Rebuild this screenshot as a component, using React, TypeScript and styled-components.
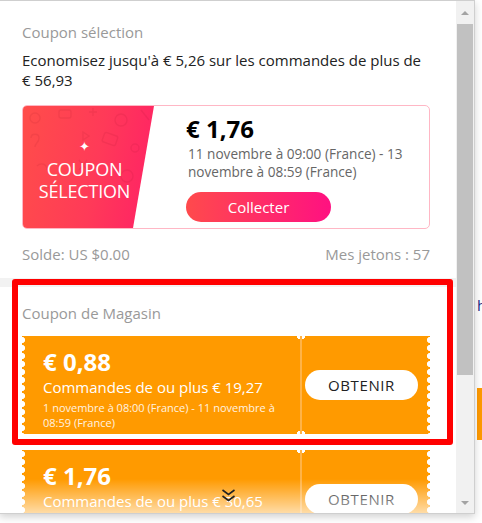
import React from 'react'
import styled, { createGlobalStyle } from 'styled-components'

const GlobalStyle = createGlobalStyle`
  html, body {
    margin: 0;
    padding: 0;
    background: #fff;
    overflow: hidden;
  }
  body {
    font-family: "Open Sans", "Liberation Sans", sans-serif;
  }
`

const orange = '#ff9a00'

const Page = styled.div`
  position: relative;
  width: 482px;
  height: 523px;
  overflow: hidden;
`

const BehindPage = styled.div`
  display: flex;
  flex-direction: column;
  padding: 296px 0 0 477px;
`

const BehindText = styled.span`
  font-size: 15px;
  line-height: 18px;
  color: #1c2a85;
`

const BehindBlock = styled.div`
  margin-top: 74px;
  height: 52px;
  background: ${orange};
`

const Popup = styled.div`
  position: absolute;
  top: 0;
  left: -1px;
  width: 474px;
  height: 512px;
  display: flex;
  border: 1px solid #cfcfcf;
  background: #fff;
  box-shadow: 0 3px 8px rgba(0, 0, 0, 0.18);
`

const Content = styled.div`
  position: relative;
  flex: 1;
  overflow: hidden;
`

const Scrollbar = styled.div`
  width: 18px;
  display: flex;
  flex-direction: column;
  background: #f1f1f1;
`

const ScrollButton = styled.div<{ $down?: boolean }>`
  height: 20px;
  display: flex;
  align-items: center;
  justify-content: center;
  padding-top: ${(p) => (p.$down ? '0' : '2px')};

  &::after {
    content: '';
    border-left: 4px solid transparent;
    border-right: 4px solid transparent;
    ${(p) =>
      p.$down ? 'border-top: 4px solid #a3a3a3;' : 'border-bottom: 4px solid #a3a3a3;'}
  }
`

const Thumb = styled.div`
  height: 351px;
  margin: 1px 1px 0;
  background: #c1c1c1;
`

const Spacer = styled.div`
  flex: 1;
`

const Section = styled.div`
  padding: 21px 26px 0 22px;
`

const Label = styled.div`
  font-size: 15px;
  line-height: 20px;
  color: #999;
`

const Description = styled.p`
  margin: 8px 0 0;
  font-size: 15px;
  line-height: 20px;
  color: #222;
`

const SelectCard = styled.div`
  margin-top: 15px;
  height: 122px;
  display: flex;
  border: 1px solid #ffb7c5;
  border-radius: 5px;
  overflow: hidden;
`

const RedPanel = styled.div`
  position: relative;
  width: 131px;
  flex-shrink: 0;
  display: flex;
  flex-direction: column;
  align-items: center;
  justify-content: center;
  padding: 6px 8px 0 0;
  box-sizing: border-box;
  background: linear-gradient(100deg, #ff4d4a 0%, #ff3a58 55%, #ff2066 100%);
  clip-path: polygon(0 0, 100% 0, calc(100% - 21px) 100%, 0 100%);
  color: #fff;
`

const Pattern = styled.svg`
  position: absolute;
  inset: 0;
`

const Sparkle = styled.span`
  position: relative;
  font-size: 13px;
  line-height: 14px;
  margin-bottom: 5px;
`

const PanelTitle = styled.span`
  position: relative;
  font-size: 18px;
  line-height: 22px;
  text-align: center;
  letter-spacing: -0.2px;
`

const CardBody = styled.div`
  flex: 1;
  padding: 8px 8px 0 32px;
  display: flex;
  flex-direction: column;
  align-items: flex-start;
`

const Amount = styled.div<{ $light?: boolean }>`
  font-size: 24px;
  font-weight: 700;
  line-height: 30px;
  color: ${(p) => (p.$light ? '#fff' : '#000')};
`

const CardDates = styled.div`
  margin: 1px 0 0 2px;
  font-size: 13.6px;
  line-height: 18px;
  color: #666;
`

const CollectButton = styled.button`
  margin-top: 11px;
  width: 145px;
  height: 30px;
  border: none;
  border-radius: 15px;
  background: linear-gradient(90deg, #ff4a4c, #ff1181);
  color: #fff;
  font-family: inherit;
  font-size: 15px;
  cursor: pointer;
`

const BalanceRow = styled.div`
  margin-top: 15px;
  display: flex;
  justify-content: space-between;
  font-size: 15px;
  line-height: 20px;
  color: #999;
`

const Divider = styled.div`
  margin-top: 14px;
  height: 9px;
  background: #f2f2f2;
`

const StoreSection = styled.div`
  position: relative;
  padding: 16px 26px 0 22px;
`

const Highlight = styled.div`
  position: absolute;
  top: -8px;
  left: 12px;
  width: 429px;
  height: 154px;
  border: 6px solid #ff0000;
  border-radius: 3px;
  pointer-events: none;
`

const StoreCoupon = styled.div<{ $first?: boolean }>`
  margin-top: ${(p) => (p.$first ? '13px' : '16px')};
  height: 98px;
  display: flex;
  gap: 2px;
  background: #ffb347;
`

const scallop = `
  content: '';
  position: absolute;
  top: 0;
  bottom: 0;
  width: 4px;
  background-size: 4px 8px;
  background-repeat: repeat-y;
`

const CouponMain = styled.div`
  position: relative;
  flex: 1;
  padding: 11px 8px 0 21px;
  background:
    radial-gradient(circle at 100% 0, #fff 3px, transparent 3.5px),
    radial-gradient(circle at 100% 100%, #fff 3px, transparent 3.5px),
    ${orange};
  color: #fff;

  &::before {
    ${scallop}
    left: 0;
    background-image: radial-gradient(circle at 0 4px, #fff 2.8px, transparent 3.3px);
  }
`

const CouponCondition = styled.div`
  font-size: 15px;
  line-height: 20px;
`

const CouponDates = styled.div`
  margin-top: 3px;
  font-size: 11px;
  line-height: 15px;
  color: #fff3e0;
`

const CouponSide = styled.div`
  position: relative;
  width: 128px;
  display: flex;
  align-items: center;
  padding-right: 9px;
  box-sizing: border-box;
  justify-content: center;
  background:
    radial-gradient(circle at 0 0, #fff 3px, transparent 3.5px),
    radial-gradient(circle at 0 100%, #fff 3px, transparent 3.5px),
    ${orange};

  &::after {
    ${scallop}
    right: 0;
    background-image: radial-gradient(circle at 100% 4px, #fff 2.8px, transparent 3.3px);
  }
`

const ObtainButton = styled.button`
  width: 113px;
  height: 30px;
  border: none;
  border-radius: 15px;
  background: #fff;
  color: #222;
  font-family: inherit;
  font-size: 15px;
  letter-spacing: 0.6px;
  cursor: pointer;
`

const Fade = styled.div`
  position: absolute;
  left: 0;
  right: 0;
  bottom: 0;
  height: 34px;
  display: flex;
  justify-content: center;
  padding-top: 10px;
  box-sizing: border-box;
  background: linear-gradient(rgba(255, 255, 255, 0), rgba(255, 255, 255, 0.65));
`

interface StoreCouponProps {
  amount: string
  condition: string
  dates?: string
  first?: boolean
}

const StoreCouponCard = ({ amount, condition, dates, first }: StoreCouponProps) => (
  <StoreCoupon $first={first}>
    <CouponMain>
      <Amount $light>{amount}</Amount>
      <CouponCondition>{condition}</CouponCondition>
      {dates && <CouponDates>{dates}</CouponDates>}
    </CouponMain>
    <CouponSide>
      <ObtainButton>OBTENIR</ObtainButton>
    </CouponSide>
  </StoreCoupon>
)

const PanelPattern = () => (
  <Pattern viewBox="0 0 131 122" fill="none" stroke="rgba(120,0,30,0.08)" strokeWidth="1.4">
    <circle cx="12" cy="12" r="5" />
    <rect x="36" y="4" width="12" height="8" rx="2" />
    <path d="M70 2v8M66 6h8" />
    <circle cx="98" cy="14" r="6" />
    <path d="M118 4l8 10" />
    <path d="M8 32c0-5 8-5 8 0s-4 5-4 9" />
    <path d="M60 26l6 4-6 4z" />
    <rect x="80" y="28" width="14" height="10" rx="2" transform="rotate(20 87 33)" />
    <circle cx="112" cy="42" r="4" />
    <path d="M14 60c4-4 10-2 10 4" />
    <path d="M56 54l8 10M64 54l-8 10" />
    <circle cx="104" cy="70" r="6" />
    <path d="M18 86l6-6 6 6" />
  </Pattern>
)

const App = () => (
  <Page>
    <GlobalStyle />
    <BehindPage>
      <BehindText>h</BehindText>
      <BehindBlock />
    </BehindPage>
    <Popup>
      <Content>
        <Section>
          <Label>Coupon sélection</Label>
          <Description>
            Economisez jusqu'à €&nbsp;5,26 sur les commandes de plus de €&nbsp;56,93
          </Description>
          <SelectCard>
            <RedPanel>
              <PanelPattern />
              <Sparkle>✦</Sparkle>
              <PanelTitle>
                COUPON
                <br />
                SÉLECTION
              </PanelTitle>
            </RedPanel>
            <CardBody>
              <Amount>€ 1,76</Amount>
              <CardDates>
                11 novembre à 09:00 (France) - 13 novembre à 08:59 (France)
              </CardDates>
              <CollectButton>Collecter</CollectButton>
            </CardBody>
          </SelectCard>
          <BalanceRow>
            <span>Solde: US $0.00</span>
            <span>Mes jetons : 57</span>
          </BalanceRow>
        </Section>
        <Divider />
        <StoreSection>
          <Highlight />
          <Label>Coupon de Magasin</Label>
          <StoreCouponCard
            first
            amount="€ 0,88"
            condition="Commandes de ou plus € 19,27"
            dates="1 novembre à 08:00 (France) - 11 novembre à 08:59 (France)"
          />
          <StoreCouponCard amount="€ 1,76" condition="Commandes de ou plus € 30,65" />
        </StoreSection>
        <Fade>
          <svg width="15" height="13" viewBox="0 0 15 13" fill="none" stroke="#222" strokeWidth="1.6">
            <polyline points="1.5,1 7.5,5.5 13.5,1" />
            <polyline points="1.5,7 7.5,11.5 13.5,7" />
          </svg>
        </Fade>
      </Content>
      <Scrollbar>
        <ScrollButton />
        <Thumb />
        <Spacer />
        <ScrollButton $down />
      </Scrollbar>
    </Popup>
  </Page>
)

export default App
